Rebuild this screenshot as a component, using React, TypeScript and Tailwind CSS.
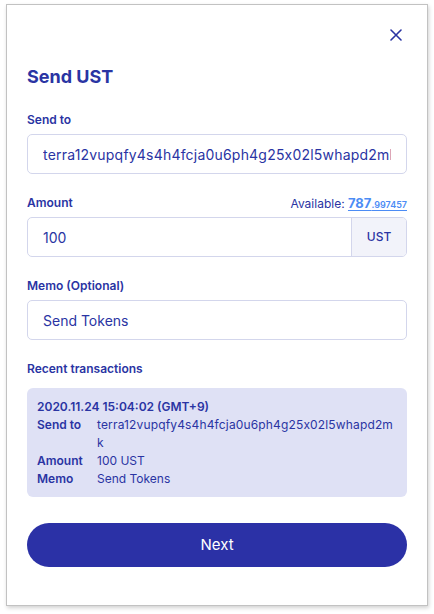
import React from 'react';

const address = 'terra12vupqfy4s4h4fcja0u6ph4g25x02l5whapd2mk';

function Label({ children, className = '' }: { children: React.ReactNode; className?: string }) {
  return (
    <div className={`text-[12px] leading-[16px] font-semibold text-[#2a34a3] ${className}`}>
      {children}
    </div>
  );
}

function Row({ label, children }: { label: string; children: React.ReactNode }) {
  return (
    <div className="flex">
      <div className="w-[60px] shrink-0 font-semibold">{label}</div>
      <div className="min-w-0 break-all">{children}</div>
    </div>
  );
}

export default function App() {
  return (
    <div
      className="w-[434px] h-[614px] bg-white pt-[4px] pl-[6px]"
      style={{ fontFamily: 'Inter, "Noto Sans", sans-serif' }}
    >
      <div className="w-[422px] h-[602px] bg-white border border-[#c2c2c2] shadow-[1px_2px_4px_rgba(0,0,0,0.18)] px-5 flex flex-col">
        {/* Close */}
        <div className="flex justify-end pr-[5px] mt-[24px]">
          <svg width="12" height="12" viewBox="0 0 12 12" className="text-[#2a34a3]">
            <path d="M1 1L11 11M11 1L1 11" stroke="currentColor" strokeWidth="1.6" strokeLinecap="round" />
          </svg>
        </div>

        <h1 className="mt-[24px] text-[18px] leading-[24px] font-bold text-[#2a34a3]">Send UST</h1>

        <Label className="mt-[23px]">Send to</Label>
        <div className="mt-[6px] h-[40px] border border-[#d3d6ec] rounded-[5px] pl-[15px] pr-[15px] flex items-center overflow-hidden">
          <span className="block min-w-0 text-[14px] tracking-[0.2px] text-[#2a34a3] whitespace-nowrap overflow-hidden">
            {address}
          </span>
        </div>

        <div className="mt-[21px] flex items-end justify-between h-[16px]">
          <Label>Amount</Label>
          <div className="text-[12px] leading-[16px] text-[#2a34a3] translate-y-[2px]">
            Available:{' '}
            <span className="text-[#4c8cf5] underline underline-offset-2">
              <span className="text-[13px] font-bold">787</span>
              <span className="text-[9px] font-semibold">.997457</span>
            </span>
          </div>
        </div>
        <div className="mt-[6px] h-[40px] border border-[#d3d6ec] rounded-[5px] flex overflow-hidden">
          <div className="flex-1 pl-[15px] flex items-center text-[14px] text-[#2a34a3]">100</div>
          <div className="w-[55px] border-l border-[#d3d6ec] bg-[#f2f3fa] flex items-center justify-center text-[12px] font-medium text-[#2a34a3]">
            UST
          </div>
        </div>

        <Label className="mt-[21px]">Memo (Optional)</Label>
        <div className="mt-[6px] h-[40px] border border-[#d3d6ec] rounded-[5px] pl-[15px] flex items-center">
          <span className="text-[14px] text-[#2a34a3]">Send Tokens</span>
        </div>

        <Label className="mt-[21px]">Recent transactions</Label>
        <div className="mt-[11px] h-[109px] rounded-[6px] bg-[#dfe1f5] px-[10px] pt-[10px] text-[12px] leading-[18px] text-[#2a34a3]">
          <div className="font-semibold">2020.11.24 15:04:02 (GMT+9)</div>
          <Row label="Send to">
            <span className="tracking-[0.15px]">{address}</span>
          </Row>
          <Row label="Amount">100 UST</Row>
          <Row label="Memo">Send Tokens</Row>
        </div>

        <button className="mt-[26px] h-[44px] rounded-full bg-[#2b31a6] text-white text-[15px] font-normal">
          Next
        </button>
      </div>
    </div>
  );
}
